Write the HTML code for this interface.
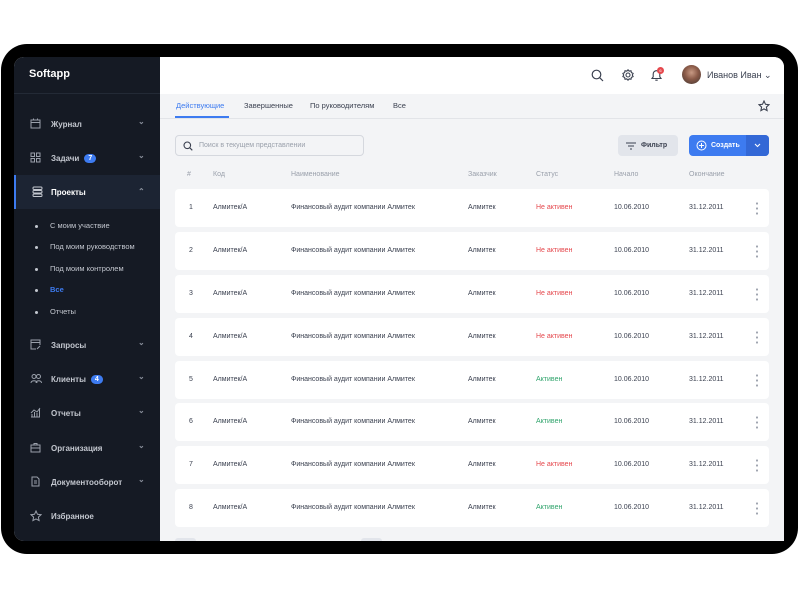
<!DOCTYPE html>
<html><head><meta charset="utf-8"><style>
*{margin:0;padding:0;box-sizing:border-box}
body{width:800px;height:600px;background:#fff;font-family:"Liberation Sans",sans-serif;position:relative;overflow:hidden}
.frame{position:absolute;left:1px;top:44px;width:797px;height:510px;background:#000;border-radius:26px}
.screen{position:absolute;left:14px;top:57px;width:770px;height:484px;background:#f3f4f6;border-radius:10px 10px 0 10px;overflow:hidden}
.side{position:absolute;left:0;top:0;width:146px;height:484px;background:#151a24}
.logo{position:absolute;left:15px;top:11px;color:#fff;font-weight:bold;font-size:11px}
.div{position:absolute;left:0;top:36px;width:146px;height:1px;background:#232a36}
.it{position:absolute;left:0;width:146px;height:34px;color:#c3c7cf;font-size:8px;font-weight:bold}
.it .t{position:absolute;left:37px;top:13px}
.it svg{position:absolute;left:16px;top:11px}
.it .ch{position:absolute;left:124px;top:10px;color:#8a909c;font-size:8px}
.act{background:#1c2433;border-left:2px solid #3d7bf0;color:#fff}
.bdg{display:inline-block;background:#3d7bf0;color:#fff;border-radius:6px;padding:1px 4px;font-size:7px;margin-left:5px;vertical-align:1px}
.sub{position:absolute;left:22px;color:#c3c7cf;font-size:7.5px}
.sub:before{content:"";position:absolute;left:-1px;top:4px;width:3px;height:3px;border-radius:2px;background:#c3c7cf}
.sub span{margin-left:14px}
.hdr{position:absolute;left:146px;top:0;width:624px;height:37px;background:#fff}
.tabs{position:absolute;left:146px;top:37px;width:624px;height:25px;border-bottom:1px solid #e2e4e8;font-size:7.5px;color:#3b4150}
.tabs span{position:absolute;top:7px}
.search{position:absolute;left:161px;top:78px;width:189px;height:21px;border:1px solid #d5d8de;border-radius:4px;background:#f3f4f6;font-size:7px;color:#9aa0ab;padding-left:23px;line-height:19px}
.btnf{position:absolute;left:604px;top:78px;width:60px;height:21px;background:#e2e5eb;border-radius:4px;font-size:7px;font-weight:bold;color:#3b4150;padding-left:23px;line-height:21px}
.btnc{position:absolute;left:675px;top:78px;width:80px;height:21px;background:#3d7bf0;border-radius:4px;font-size:7px;font-weight:bold;color:#fff;padding-left:22px;line-height:21px}
.btnc .dd{position:absolute;right:0;top:0;width:23px;height:21px;background:#3368d6;border-radius:0 4px 4px 0}
.th{position:absolute;top:114px;font-size:7px;color:#9aa0ab}
.row{position:absolute;left:161px;width:594px;height:38px;background:#fff;border-radius:4px;font-size:7px;color:#3b4150}
.row span{position:absolute;top:15px}
.red{color:#e5484d}.grn{color:#30a46c}
.dots{position:absolute;left:581px;top:12px;width:2px;height:14px;background:radial-gradient(circle,#a0a5b0 1px,transparent 1.2px) 0 0/2px 5px}
</style></head><body>
<div class="frame"></div>
<div class="screen">
<div class="side">
<div class="logo">Softapp</div><div class="div"></div>
<div class="it" style="top:50px"><svg width="11" height="11" viewBox="0 0 11 11" fill="none" stroke="#9aa0ab"><rect x="1" y="2" width="9" height="8"/><path d="M1 4.5h9M3.5 0.5v2M7.5 0.5v2"/></svg><span class="t">Журнал</span><span class="ch">⌄</span></div>
<div class="it" style="top:84px"><svg width="11" height="11" viewBox="0 0 11 11" fill="none" stroke="#9aa0ab"><rect x="1" y="1" width="3.5" height="3.5"/><rect x="6.5" y="1" width="3.5" height="3.5"/><rect x="1" y="6.5" width="3.5" height="3.5"/><rect x="6.5" y="6.5" width="3.5" height="3.5"/></svg><span class="t">Задачи<span class="bdg">7</span></span><span class="ch">⌄</span></div>
<div class="it act" style="top:118px"><svg width="11" height="11" viewBox="0 0 11 11" fill="none" stroke="#c3c7cf"><rect x="1" y="1" width="9" height="2.5" rx="1"/><rect x="1" y="4.5" width="9" height="2.5" rx="1"/><rect x="1" y="8" width="9" height="2.5" rx="1"/></svg><span class="t" style="left:35px">Проекты</span><span class="ch" style="left:122px;top:12px">⌃</span></div>
<div class="sub" style="top:164px"><span>С моим участвие</span></div>
<div class="sub" style="top:185px"><span>Под моим руководством</span></div>
<div class="sub" style="top:207px"><span>Под моим контролем</span></div>
<div class="sub" style="top:228px;color:#3d7bf0;font-weight:bold"><span>Все</span></div>
<div class="sub" style="top:250px"><span>Отчеты</span></div>
<div class="it" style="top:271px"><svg width="11" height="11" viewBox="0 0 11 11" fill="none" stroke="#9aa0ab"><path d="M6 10H1V1h9v5M1 3.5h9M7 10l3-3"/></svg><span class="t">Запросы</span><span class="ch">⌄</span></div>
<div class="it" style="top:305px"><svg width="12" height="11" viewBox="0 0 12 11" fill="none" stroke="#9aa0ab"><circle cx="4" cy="3.5" r="2"/><circle cx="8.5" cy="3.5" r="2"/><path d="M1 10c0-3 6-3 6 0M6 10c0-3 5.5-3 5.5 0"/></svg><span class="t">Клиенты<span class="bdg">4</span></span><span class="ch">⌄</span></div>
<div class="it" style="top:339px"><svg width="11" height="11" viewBox="0 0 11 11" fill="none" stroke="#9aa0ab"><path d="M1 10h9M2 10V7M4.5 10V5M7 10V6M9.5 10V2M1 6l3-3 3 2 3-4"/></svg><span class="t">Отчеты</span><span class="ch">⌄</span></div>
<div class="it" style="top:374px"><svg width="11" height="11" viewBox="0 0 11 11" fill="none" stroke="#9aa0ab"><rect x="1" y="3" width="9" height="7"/><path d="M4 3V1.5h3V3M1 6h9"/></svg><span class="t">Организация</span><span class="ch">⌄</span></div>
<div class="it" style="top:408px"><svg width="11" height="11" viewBox="0 0 11 11" fill="none" stroke="#9aa0ab"><path d="M2 1h5l2 2v7H2zM4 5h3M4 7h3"/></svg><span class="t">Документооборот</span><span class="ch">⌄</span></div>
<div class="it" style="top:442px"><svg width="12" height="12" viewBox="0 0 12 12" fill="none" stroke="#9aa0ab"><path d="M6 1l1.5 3.3 3.5.4-2.6 2.4.7 3.5L6 8.9 2.9 10.6l.7-3.5L1 4.7l3.5-.4z"/></svg><span class="t">Избранное</span></div>
</div>
<div class="hdr">
<svg style="position:absolute;left:431px;top:12px" width="13" height="13" viewBox="0 0 13 13" fill="none" stroke="#3b4150" stroke-width="1.2"><circle cx="5.5" cy="5.5" r="4.3"/><path d="M8.7 8.7l3.3 3.3"/></svg>
<svg style="position:absolute;left:462px;top:12px" width="12" height="12" viewBox="0 0 12 12" fill="none" stroke="#3b4150" stroke-width="1.1"><circle cx="6" cy="6" r="2"/><path d="M6 .8l1.2 1.3 1.8-.3.4 1.8 1.7.8-.8 1.6.8 1.6-1.7.8-.4 1.8-1.8-.3L6 11.2 4.8 9.9 3 10.2 2.6 8.4.9 7.6 1.7 6 .9 4.4l1.7-.8L3 1.8l1.8.3z"/></svg>
<svg style="position:absolute;left:490px;top:11px" width="13" height="14" viewBox="0 0 13 14" fill="none" stroke="#3b4150" stroke-width="1.1"><path d="M2 10.5h9l-1.2-1.7V6a3.3 3.3 0 00-6.6 0v2.8zM5.3 12.2h2.4"/></svg>
<div style="position:absolute;left:497px;top:10px;width:7px;height:7px;border-radius:4px;background:#e5484d;color:#fff;font-size:4px;text-align:center;line-height:7px">6</div>
<div style="position:absolute;left:522px;top:8px;width:19px;height:19px;border-radius:10px;background:radial-gradient(circle at 50% 40%,#c89a84 0,#8a5a48 45%,#3e3431 100%)"></div>
<div style="position:absolute;left:547px;top:13px;font-size:9px;color:#3b4150">Иванов Иван ⌄</div>
</div>
<div class="tabs">
<span style="left:16px;color:#3d7bf0">Действующие</span>
<div style="position:absolute;left:15px;top:22px;width:54px;height:2px;background:#3d7bf0"></div>
<span style="left:84px">Завершенные</span><span style="left:150px">По руководителям</span><span style="left:233px">Все</span>
<svg style="position:absolute;left:598px;top:6px" width="12" height="12" viewBox="0 0 12 12" fill="none" stroke="#3b4150" stroke-width="1.1"><path d="M6 1l1.5 3.3 3.5.4-2.6 2.4.7 3.5L6 8.9 2.9 10.6l.7-3.5L1 4.7l3.5-.4z"/></svg>
</div>
<div class="search">Поиск  в текущем представлении<svg style="position:absolute;left:7px;top:5px" width="10" height="10" viewBox="0 0 10 10" fill="none" stroke="#3b4150" stroke-width="1.1"><circle cx="4.3" cy="4.3" r="3.3"/><path d="M6.8 6.8L9.3 9.3"/></svg></div>
<div class="btnf"><svg style="position:absolute;left:8px;top:7px" width="10" height="8" viewBox="0 0 10 8" stroke="#3b4150"><path d="M0 1h10M2 4h6M4 7h2"/></svg>Фильтр</div>
<div class="btnc"><svg style="position:absolute;left:7px;top:5px" width="11" height="11" viewBox="0 0 11 11" fill="none" stroke="#fff"><circle cx="5.5" cy="5.5" r="4.5"/><path d="M5.5 3v5M3 5.5h5"/></svg>Создать<div class="dd"><svg style="position:absolute;left:8px;top:8px" width="7" height="5" viewBox="0 0 7 5" fill="none" stroke="#fff" stroke-width="1.1"><path d="M1 1l2.5 2.5L6 1"/></svg></div></div>
<span class="th" style="left:173px">#</span><span class="th" style="left:199px">Код</span><span class="th" style="left:277px">Наименование</span><span class="th" style="left:454px">Заказчик</span><span class="th" style="left:522px">Статус</span><span class="th" style="left:600px">Начало</span><span class="th" style="left:675px">Окончание</span>
<div class="row" style="top:132px"><span style="left:14px">1</span><span style="left:38px">Алмитек/А</span><span style="left:116px">Финансовый аудит компании Алмитек</span><span style="left:293px">Алмитек</span><span class="red" style="left:361px">Не активен</span><span style="left:439px">10.06.2010</span><span style="left:514px">31.12.2011</span><div class="dots"></div></div>
<div class="row" style="top:175px"><span style="left:14px">2</span><span style="left:38px">Алмитек/А</span><span style="left:116px">Финансовый аудит компании Алмитек</span><span style="left:293px">Алмитек</span><span class="red" style="left:361px">Не активен</span><span style="left:439px">10.06.2010</span><span style="left:514px">31.12.2011</span><div class="dots"></div></div>
<div class="row" style="top:218px"><span style="left:14px">3</span><span style="left:38px">Алмитек/А</span><span style="left:116px">Финансовый аудит компании Алмитек</span><span style="left:293px">Алмитек</span><span class="red" style="left:361px">Не активен</span><span style="left:439px">10.06.2010</span><span style="left:514px">31.12.2011</span><div class="dots"></div></div>
<div class="row" style="top:261px"><span style="left:14px">4</span><span style="left:38px">Алмитек/А</span><span style="left:116px">Финансовый аудит компании Алмитек</span><span style="left:293px">Алмитек</span><span class="red" style="left:361px">Не активен</span><span style="left:439px">10.06.2010</span><span style="left:514px">31.12.2011</span><div class="dots"></div></div>
<div class="row" style="top:304px"><span style="left:14px">5</span><span style="left:38px">Алмитек/А</span><span style="left:116px">Финансовый аудит компании Алмитек</span><span style="left:293px">Алмитек</span><span class="grn" style="left:361px">Активен</span><span style="left:439px">10.06.2010</span><span style="left:514px">31.12.2011</span><div class="dots"></div></div>
<div class="row" style="top:346px"><span style="left:14px">6</span><span style="left:38px">Алмитек/А</span><span style="left:116px">Финансовый аудит компании Алмитек</span><span style="left:293px">Алмитек</span><span class="grn" style="left:361px">Активен</span><span style="left:439px">10.06.2010</span><span style="left:514px">31.12.2011</span><div class="dots"></div></div>
<div class="row" style="top:389px"><span style="left:14px">7</span><span style="left:38px">Алмитек/А</span><span style="left:116px">Финансовый аудит компании Алмитек</span><span style="left:293px">Алмитек</span><span class="red" style="left:361px">Не активен</span><span style="left:439px">10.06.2010</span><span style="left:514px">31.12.2011</span><div class="dots"></div></div>
<div class="row" style="top:432px"><span style="left:14px">8</span><span style="left:38px">Алмитек/А</span><span style="left:116px">Финансовый аудит компании Алмитек</span><span style="left:293px">Алмитек</span><span class="grn" style="left:361px">Активен</span><span style="left:439px">10.06.2010</span><span style="left:514px">31.12.2011</span><div class="dots"></div></div>
<div style="position:absolute;left:161px;top:481px;width:21px;height:10px;background:#e2e5eb;border-radius:3px"></div>
<div style="position:absolute;left:347px;top:481px;width:21px;height:10px;background:#e2e5eb;border-radius:3px"></div>
</div>
</body></html>
